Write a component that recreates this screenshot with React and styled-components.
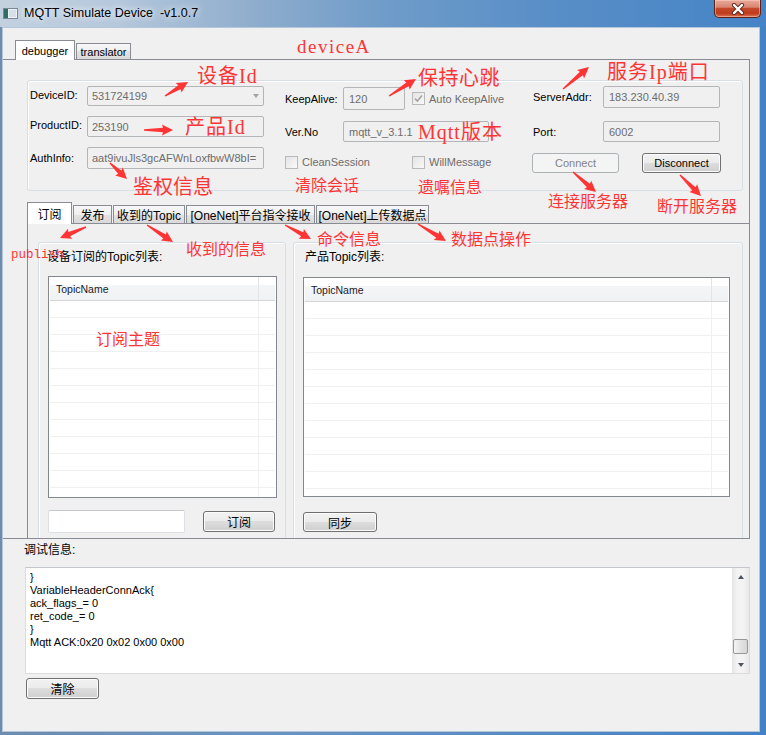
import React from 'react';
import styled, { createGlobalStyle } from 'styled-components';

const GlobalStyle = createGlobalStyle`
  html, body { margin: 0; padding: 0; }
  body {
    font-family: "Liberation Sans", "Noto Sans CJK SC", sans-serif;
    font-size: 11px;
    color: #000;
    background: #fff;
  }
  * { box-sizing: border-box; }
`;

const Window = styled.div`
  position: relative;
  width: 766px;
  height: 735px;
  overflow: hidden;
  display: flex;
  flex-direction: column;
  background: linear-gradient(90deg, #6d8cae 0%, #6a93c2 35%, #4382c6 100%);
`;

const TitleBar = styled.div`
  height: 27px;
  flex: none;
  display: flex;
  align-items: flex-start;
  padding-left: 3px;
  background: linear-gradient(90deg, #c3d1df 0%, #b5c8dc 15%, #8fadcd 33%, #6f9cc9 50%, #5a8fc7 70%, #4584c6 100%);
`;

const AppIcon = styled.svg`
  margin-top: 8px;
  flex: none;
`;

const Title = styled.div`
  margin: 6px 0 0 6px;
  font-size: 12.5px;
  line-height: 15px;
  color: #000;
  text-shadow: 0 0 6px rgba(255, 255, 255, 0.95), 0 0 10px rgba(255, 255, 255, 0.7);
  white-space: pre;
`;

const CloseButton = styled.div`
  margin-left: auto;
  margin-right: 5px;
  width: 47px;
  height: 18px;
  display: flex;
  align-items: center;
  justify-content: center;
  border: 1px solid #5e2218;
  border-top: none;
  border-radius: 0 0 5px 5px;
  background: linear-gradient(#e9ab9b 0%, #d98571 42%, #c4492c 50%, #bf3a1b 78%, #dc7453 100%);
  box-shadow: inset 0 0 0 1px rgba(255, 220, 210, 0.45);
`;

const Client = styled.div`
  flex: 1;
  min-height: 0;
  margin: 0 6px 3px 2px;
  border: 1px solid #b4c6da;
  background: #f0f0f0;
  display: flex;
  flex-direction: column;
  padding-top: 12px;
`;

const TabBar = styled.div`
  position: relative;
  z-index: 2;
  display: flex;
  gap: 1px;
  height: ${p => p.$h}px;
  margin-left: ${p => p.$indent}px;
  margin-top: ${p => p.$top || 0}px;
  flex: none;
`;

const Tab = styled.div`
  width: ${p => p.$w}px;
  height: ${p => (p.$active ? '100%' : 'calc(100% - 4px)')};
  margin-top: ${p => (p.$active ? 0 : 3)}px;
  display: flex;
  align-items: center;
  justify-content: center;
  border: 1px solid #898c95;
  border-bottom: none;
  background: ${p =>
    p.$active ? '#fff' : 'linear-gradient(#f7f7f7, #efefef 50%, #e3e3e3 50%, #d9d9d9)'};
  font-size: ${p => (p.$cjk ? 12 : 11)}px;
  white-space: nowrap;
`;

const OuterPane = styled.div`
  position: relative;
  z-index: 1;
  height: 480px;
  flex: none;
  margin: -1px 9px 0 0;
  border-top: 1px solid #898c95;
  border-right: 1px solid #898c95;
  border-bottom: 1px solid #898c95;
  padding: 20px 0 0 24px;
  display: flex;
  flex-direction: column;
`;

const ConnGroup = styled.div`
  flex: none;
  height: 111px;
  margin-right: 6px;
  border: 1px solid #d5dfe5;
  border-radius: 3px;
  box-shadow: inset 1px 1px 0 #fff;
  display: flex;
`;

const FormCol = styled.div`
  display: grid;
  grid-template-columns: ${p => p.$cols};
  grid-template-rows: ${p => p.$rows};
  row-gap: ${p => p.$gap}px;
  margin-left: ${p => p.$ml}px;
  padding-top: ${p => p.$pt}px;
  width: ${p => p.$w}px;
  align-content: start;
`;

const Label = styled.div`
  align-self: center;
  font-size: 11px;
  white-space: nowrap;
  padding-left: ${p => p.$pl || 0}px;
  margin-top: ${p => p.$mt || 0}px;
`;

const Field = styled.div`
  position: relative;
  width: ${p => (p.$w ? `${p.$w}px` : 'auto')};
  height: 100%;
  border: 1px solid #b3b6b9;
  border-radius: 2px;
  background: #f0f0f0;
  color: #6d6d6d;
  font-size: 11px;
  display: flex;
  align-items: center;
  padding-left: ${p => p.$pl || 4}px;
  white-space: nowrap;
  overflow: hidden;
`;

const ComboArrow = styled.span`
  position: absolute;
  right: 4px;
  top: 50%;
  margin-top: -2px;
  border-left: 3.5px solid transparent;
  border-right: 3.5px solid transparent;
  border-top: 4px solid #a3a3a3;
`;

const FieldRow = styled.div`
  display: flex;
  align-items: center;
  height: 100%;
  grid-column: ${p => (p.$span ? '1 / -1' : 'auto')};
`;

const Check = styled.label`
  display: flex;
  align-items: center;
  gap: 4px;
  color: #6d6d6d;
  font-size: 11px;
  width: ${p => (p.$w ? `${p.$w}px` : 'auto')};
  margin-left: ${p => p.$ml || 0}px;
  white-space: nowrap;
`;

const CheckBox = styled.span`
  width: 13px;
  height: 13px;
  flex: none;
  border: 1px solid #b9b9b9;
  background: linear-gradient(135deg, #e4e4e4, #f9f9f9);
  display: inline-flex;
  align-items: center;
  justify-content: center;
`;

const Button = styled.button`
  width: ${p => p.$w}px;
  height: ${p => p.$h}px;
  margin: ${p => p.$m || 0};
  flex: none;
  padding: 0;
  border: 1px solid ${p => (p.$disabled ? '#adb2b5' : '#707070')};
  border-radius: 3px;
  background: ${p =>
    p.$disabled
      ? '#f4f4f4'
      : 'linear-gradient(#f2f2f2 0%, #ebebeb 49%, #dddddd 50%, #cfcfcf 100%)'};
  box-shadow: inset 0 0 0 1px ${p => (p.$disabled ? '#f4f4f4' : '#fcfcfc')};
  font-family: "Liberation Sans", "Noto Sans CJK SC", sans-serif;
  font-size: ${p => (p.$cjk ? 12 : 11)}px;
  color: ${p => (p.$disabled ? '#838383' : '#000')};
`;

const InnerPane = styled.div`
  position: relative;
  z-index: 1;
  flex: 1;
  min-height: 0;
  margin-top: -1px;
  border-top: 1px solid #898c95;
  border-left: 1px solid #898c95;
  overflow: hidden;
  display: flex;
  align-items: flex-start;
  gap: 7px;
  padding: 18px 0 0 10px;
`;

const TopicGroup = styled.div`
  width: ${p => p.$w}px;
  height: 320px;
  flex: none;
  border: 1px solid #d5dfe5;
  border-radius: 3px;
  box-shadow: inset 1px 1px 0 #fff;
  display: flex;
  flex-direction: column;
  align-items: flex-start;
  padding-top: 7px;
`;

const GroupTitle = styled.div`
  font-size: 12px;
  line-height: 14px;
  margin-left: ${p => p.$ml}px;
`;

const Table = styled.div`
  width: ${p => p.$w}px;
  height: ${p => p.$h}px;
  margin: ${p => p.$mt}px 0 0 9px;
  border: 1px solid #828790;
  background: #fff;
  padding: 0 1px;
  overflow: hidden;
  flex: none;
`;

const TableRow = styled.div`
  display: grid;
  grid-template-columns: ${p => p.$col}px 1fr;
  height: ${p => (p.$header ? 24 : 17)}px;
  border-bottom: 1px solid ${p => (p.$header ? '#d5d5d5' : '#f0f0f0')};
  background: ${p =>
    p.$header ? 'linear-gradient(#ffffff 0%, #ffffff 35%, #f4f5f7 36%, #f1f2f4 100%)' : '#fff'};
`;

const Cell = styled.div`
  display: flex;
  align-items: center;
  padding-left: 6px;
  font-size: 10.5px;
  color: #1a1a2a;
  border-left: ${p => (p.$divider ? `1px solid ${p.$header ? '#e2e4e8' : '#f0f0f0'}` : 'none')};
`;

const BottomRow = styled.div`
  display: flex;
  align-items: flex-start;
  margin: ${p => p.$mt}px 0 0 9px;
`;

const TextInput = styled.div`
  width: 137px;
  height: 23px;
  border: 1px solid #dcdfe3;
  border-top-color: #c5c9ce;
  border-radius: 2px;
  background: #fff;
`;

const DebugLabel = styled.div`
  margin: 4px 0 0 21px;
  font-size: 12px;
  line-height: 14px;
`;

const DebugBox = styled.div`
  height: 107px;
  margin: 10px 9px 0 22px;
  border: 1px solid #d9dbdf;
  border-top-color: #c3c6cb;
  background: #fff;
  display: flex;
`;

const DebugText = styled.div`
  flex: 1;
  padding: 3px 0 0 4px;
  font-size: 11px;
  line-height: 13px;
  white-space: pre;
`;

const ScrollBar = styled.div`
  width: 17px;
  display: flex;
  flex-direction: column;
  background: linear-gradient(90deg, #e5e5e5, #f3f3f3 30%, #f3f3f3 70%, #e8e8e8);
`;

const ScrollArrow = styled.div`
  height: 17px;
  display: flex;
  align-items: center;
  justify-content: center;
  &::after {
    content: "";
    border-left: 3.5px solid transparent;
    border-right: 3.5px solid transparent;
    ${p => (p.$down ? 'border-top' : 'border-bottom')}: 4px solid #4d5563;
  }
`;

const ScrollTrack = styled.div`
  flex: 1;
  display: flex;
  flex-direction: column;
  align-items: center;
`;

const ScrollThumb = styled.div`
  width: 15px;
  height: 15px;
  margin-top: 54px;
  border: 1px solid #979797;
  border-radius: 2px;
  background: linear-gradient(90deg, #f4f4f4, #e3e3e3 50%, #d6d6d6);
`;

const Overlay = styled.div`
  position: absolute;
  inset: 0;
  pointer-events: none;
  z-index: 10;
`;

const Note = styled.div`
  position: absolute;
  left: ${p => p.$x}px;
  top: ${p => p.$y}px;
  font-family: ${p => (p.$mono ? '"Liberation Mono"' : '"Liberation Serif"')}, "Noto Sans CJK SC", serif;
  font-size: ${p => p.$size}px;
  line-height: 1;
  letter-spacing: ${p => p.$ls || 0}px;
  color: #ff3535;
  white-space: nowrap;
`;

const ArrowLayer = styled.svg`
  position: absolute;
  left: 0;
  top: 0;
`;

const notes = [
  { text: 'deviceA', x: 297, y: 37, size: 19, ls: 1.5 },
  { text: '设备Id', x: 197, y: 66, size: 20, ls: 1 },
  { text: '产品Id', x: 185, y: 117, size: 20, ls: 1 },
  { text: '鉴权信息', x: 133, y: 177, size: 20 },
  { text: '保持心跳', x: 418, y: 68, size: 20, ls: 0.5 },
  { text: 'Mqtt版本', x: 418, y: 122, size: 20, ls: 1 },
  { text: '服务Ip端口', x: 607, y: 62, size: 20, ls: 1 },
  { text: '清除会话', x: 295, y: 178, size: 16 },
  { text: '遗嘱信息', x: 418, y: 180, size: 16 },
  { text: '连接服务器', x: 548, y: 194, size: 16 },
  { text: '断开服务器', x: 657, y: 199, size: 16 },
  { text: 'publish', x: 11, y: 249, size: 12.5, mono: true },
  { text: '收到的信息', x: 186, y: 242, size: 16 },
  { text: '命令信息', x: 317, y: 232, size: 16 },
  { text: '数据点操作', x: 451, y: 232, size: 16 },
  { text: '订阅主题', x: 96, y: 332, size: 16 },
];

const arrows = [
  [165, 96, 188, 82],
  [144, 130, 173, 130],
  [110, 163, 127, 179],
  [389, 96, 416, 79],
  [563, 89, 589, 67],
  [573, 172, 596, 192],
  [680, 175, 701, 196],
  [86, 227, 60, 238],
  [147, 225, 173, 242],
  [285, 225, 311, 239],
  [418, 224, 446, 241],
];

function arrowShape(len) {
  const h = 11;
  return [
    [0, -0.7], [len - h + 1, -2.3], [len - h, -5.5], [len, 0],
    [len - h, 5.5], [len - h + 1, 2.3], [0, 0.7],
  ].map(p => p.join(',')).join(' ');
}

const Arrow = ({ x1, y1, x2, y2 }) => {
  const len = Math.hypot(x2 - x1, y2 - y1);
  const deg = (Math.atan2(y2 - y1, x2 - x1) * 180) / Math.PI;
  return (
    <polygon
      points={arrowShape(len)}
      transform={`translate(${x1} ${y1}) rotate(${deg})`}
      fill="#ff3535"
    />
  );
};

const TopicTable = ({ w, h, mt, col }) => (
  <Table $w={w} $h={h} $mt={mt}>
    <TableRow $header $col={col}>
      <Cell $header>TopicName</Cell>
      <Cell $header $divider />
    </TableRow>
    {Array.from({ length: 13 }).map((_, i) => (
      <TableRow key={i} $col={col}>
        <Cell />
        <Cell $divider />
      </TableRow>
    ))}
  </Table>
);

const CheckMark = () => (
  <svg width="9" height="9" viewBox="0 0 9 9">
    <path d="M1 4.6 L3.4 7 L8 1.5" fill="none" stroke="#a4a4a4" strokeWidth="1.6" />
  </svg>
);

export default function App() {
  return (
    <>
      <GlobalStyle />
      <Window>
        <TitleBar>
          <AppIcon width="15" height="11" viewBox="0 0 15 11">
            <rect x="0.5" y="0.5" width="14" height="10" fill="#eef2f6" stroke="#7a8794" />
            <rect x="1" y="1" width="4" height="9" fill="#2f6e60" />
            <rect x="6" y="2" width="7" height="7" fill="#d7dfe8" />
          </AppIcon>
          <Title>MQTT Simulate Device  -v1.0.7</Title>
          <CloseButton>
            <svg width="14" height="12" viewBox="0 0 14 12">
              <path d="M3 2 L11 10 M11 2 L3 10" stroke="#5a2a22" strokeWidth="4.2" strokeLinecap="round" />
              <path d="M3 2 L11 10 M11 2 L3 10" stroke="#fff" strokeWidth="2.4" strokeLinecap="round" />
            </svg>
          </CloseButton>
        </TitleBar>

        <Client>
          <TabBar $h={20} $indent={12}>
            <Tab $active $w={60}>debugger</Tab>
            <Tab $w={55}>translator</Tab>
          </TabBar>

          <OuterPane>
            <ConnGroup>
              <FormCol $w={234} $ml={2} $pt={5} $cols="57px 177px" $rows="20px 21px 22px" $gap={10}>
                <Label $mt={-3}>DeviceID:</Label>
                <Field>
                  531724199
                  <ComboArrow />
                </Field>
                <Label $mt={-3}>ProductID:</Label>
                <Field>253190</Field>
                <Label>AuthInfo:</Label>
                <Field>aat9ivuJls3gcAFWnLoxfbwW8bI=</Field>
              </FormCol>

              <FormCol $w={225} $ml={21} $pt={6} $cols="58px 1fr" $rows="23px 21px 18px" $gap={11}>
                <Label>KeepAlive:</Label>
                <FieldRow>
                  <Field $w={62} $pl={5}>120</Field>
                  <Check $ml={7}>
                    <CheckBox><CheckMark /></CheckBox>
                    Auto KeepAlive
                  </Check>
                </FieldRow>
                <Label>Ver.No</Label>
                <Field $w={146} $pl={5}>mqtt_v_3.1.1</Field>
                <FieldRow $span>
                  <Check $w={127}>
                    <CheckBox />
                    CleanSession
                  </Check>
                  <Check>
                    <CheckBox />
                    WillMessage
                  </Check>
                </FieldRow>
              </FormCol>

              <FormCol $w={190} $ml={22} $pt={5} $cols="71px 117px" $rows="22px 21px 20px" $gap={13}>
                <Label $pl={1}>ServerAddr:</Label>
                <Field $pl={5}>183.230.40.39</Field>
                <Label $pl={1}>Port:</Label>
                <Field $pl={5}>6002</Field>
                <FieldRow $span>
                  <Button $disabled $w={87} $h={20} $m="-4px 0 0 0">Connect</Button>
                  <Button $w={79} $h={20} $m="-4px 0 0 23px">Disconnect</Button>
                </FieldRow>
              </FormCol>
            </ConnGroup>

            <TabBar $h={22} $indent={0} $top={11}>
              <Tab $active $cjk $w={45}>订阅</Tab>
              <Tab $cjk $w={39}>发布</Tab>
              <Tab $cjk $w={72}>收到的Topic</Tab>
              <Tab $cjk $w={129}>[OneNet]平台指令接收</Tab>
              <Tab $cjk $w={113}>[OneNet]上传数据点</Tab>
            </TabBar>

            <InnerPane>
              <TopicGroup $w={248}>
                <GroupTitle $ml={8}>设备订阅的Topic列表:</GroupTitle>
                <TopicTable w={229} h={222} mt={12} col={208} />
                <BottomRow $mt={12}>
                  <TextInput />
                  <Button $cjk $w={72} $h={21} $m="1px 0 0 18px">订阅</Button>
                </BottomRow>
              </TopicGroup>
              <TopicGroup $w={450}>
                <GroupTitle $ml={11}>产品Topic列表:</GroupTitle>
                <TopicTable w={427} h={220} mt={13} col={406} />
                <BottomRow $mt={15}>
                  <Button $cjk $w={74} $h={20}>同步</Button>
                </BottomRow>
              </TopicGroup>
            </InnerPane>
          </OuterPane>

          <DebugLabel>调试信息:</DebugLabel>
          <DebugBox>
            <DebugText>
              {'}\nVariableHeaderConnAck{\nack_flags_= 0\nret_code_= 0\n}\nMqtt ACK:0x20 0x02 0x00 0x00'}
            </DebugText>
            <ScrollBar>
              <ScrollArrow />
              <ScrollTrack>
                <ScrollThumb />
              </ScrollTrack>
              <ScrollArrow $down />
            </ScrollBar>
          </DebugBox>
          <Button $cjk $w={73} $h={21} $m="4px 0 0 23px">清除</Button>
        </Client>

        <Overlay>
          {notes.map(n => (
            <Note key={n.text} $x={n.x} $y={n.y} $size={n.size} $ls={n.ls} $mono={n.mono}>
              {n.text}
            </Note>
          ))}
          <ArrowLayer width="766" height="735">
            {arrows.map(([x1, y1, x2, y2], i) => (
              <Arrow key={i} x1={x1} y1={y1} x2={x2} y2={y2} />
            ))}
          </ArrowLayer>
        </Overlay>
      </Window>
    </>
  );
}
